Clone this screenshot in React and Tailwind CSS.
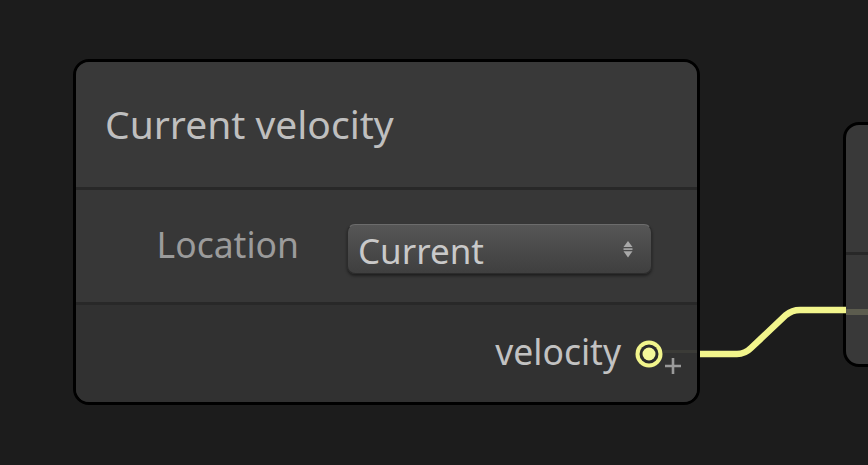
import React from 'react'

const font = { fontFamily: '"Noto Sans", "Open Sans", sans-serif' }

function SelectArrows() {
  return (
    <svg width="12" height="20" viewBox="0 0 12 20" aria-hidden>
      <path d="M6 2 L10.5 8 H1.5 Z" fill="#a8a8a8" />
      <rect x="1.5" y="9.3" width="9" height="1.6" fill="#a8a8a8" />
      <path d="M1.5 12.2 H10.5 L6 18.5 Z" fill="#a8a8a8" />
    </svg>
  )
}

function Port() {
  return (
    <svg width="28" height="28" viewBox="0 0 28 28" aria-hidden>
      <circle cx="14" cy="14" r="13.5" fill="#f2f58c" />
      <circle cx="14" cy="14" r="9.5" fill="#2b2b2b" />
      <circle cx="14" cy="14" r="6.5" fill="#f4f79a" />
    </svg>
  )
}

function PlusMark() {
  return (
    <svg className="absolute right-[15px] top-[52px]" width="18" height="18" viewBox="0 0 18 18" aria-hidden>
      <path d="M9 1 V17 M1 9 H17" stroke="#9a9a9a" strokeWidth="2.6" />
    </svg>
  )
}

function Wire() {
  return (
    <svg
      className="absolute left-0 top-0 pointer-events-none"
      width="868"
      height="465"
      viewBox="0 0 868 465"
      aria-hidden
    >
      <path
        d="M700 354 H737 Q745 354 751 348 L786 315 Q792 310 800 310 H846"
        fill="none"
        stroke="#f2f58c"
        strokeWidth="6.5"
      />
    </svg>
  )
}

function CurrentVelocityNode() {
  return (
    <div className="absolute left-[73px] top-[59px] w-[627px] h-[346px] rounded-[16px] border-[3px] border-black bg-[#272727] overflow-hidden flex flex-col">
      <div className="h-[125px] shrink-0 bg-[#393939] flex items-center pl-[29px]">
        <span className="text-[39px] leading-none text-[#bfbfbf] pb-[2px]">Current velocity</span>
      </div>
      <div className="h-[3px] shrink-0 bg-[#282828]" />
      <div className="h-[112px] shrink-0 bg-[#373737] flex items-center">
        <div className="w-[223px] flex justify-end pb-[3px]">
          <span className="text-[35.5px] leading-none text-[#9b9b9b]">Location</span>
        </div>
        <div className="ml-[48px] mt-[6px] w-[305px] h-[50px] rounded-[8px] border border-[#2c2c2c] border-t-[#6c6c6c] bg-gradient-to-b from-[#565656] to-[#3f3f3f] shadow-[0_2px_3px_rgba(0,0,0,0.45)] flex items-center justify-between pl-[10px] pr-[17px]">
          <span className="text-[35px] leading-none text-[#c9c9c9] pt-[3px]">Current</span>
          <SelectArrows />
        </div>
      </div>
      <div className="h-[3px] shrink-0 bg-[#282828]" />
      <div className="flex-1 bg-[#313131] flex items-center justify-end pr-[34px] relative">
        <span className="text-[35.5px] leading-none text-[#c2c2c2] mr-[14px] pb-[4px]">velocity</span>
        <Port />
        <div className="absolute right-0 top-[45px] w-[34px] h-[3px] bg-[#3b3b37]" />
        <PlusMark />
      </div>
    </div>
  )
}

function NextNode() {
  return (
    <div className="absolute left-[843px] top-[122px] w-[80px] h-[245px] rounded-[16px] border-[3px] border-black bg-[#393939] overflow-hidden flex flex-col">
      <div className="h-[127px] shrink-0" />
      <div className="h-[3px] shrink-0 bg-[#282828]" />
      <div className="flex-1 relative">
        <div className="absolute left-0 right-0 top-[54px] h-[6px] bg-[#5c5c4e]" />
      </div>
    </div>
  )
}

export default function App() {
  return (
    <div className="relative w-[868px] h-[465px] bg-[#1c1c1c] overflow-hidden" style={font}>
      <CurrentVelocityNode />
      <NextNode />
      <Wire />
    </div>
  )
}
